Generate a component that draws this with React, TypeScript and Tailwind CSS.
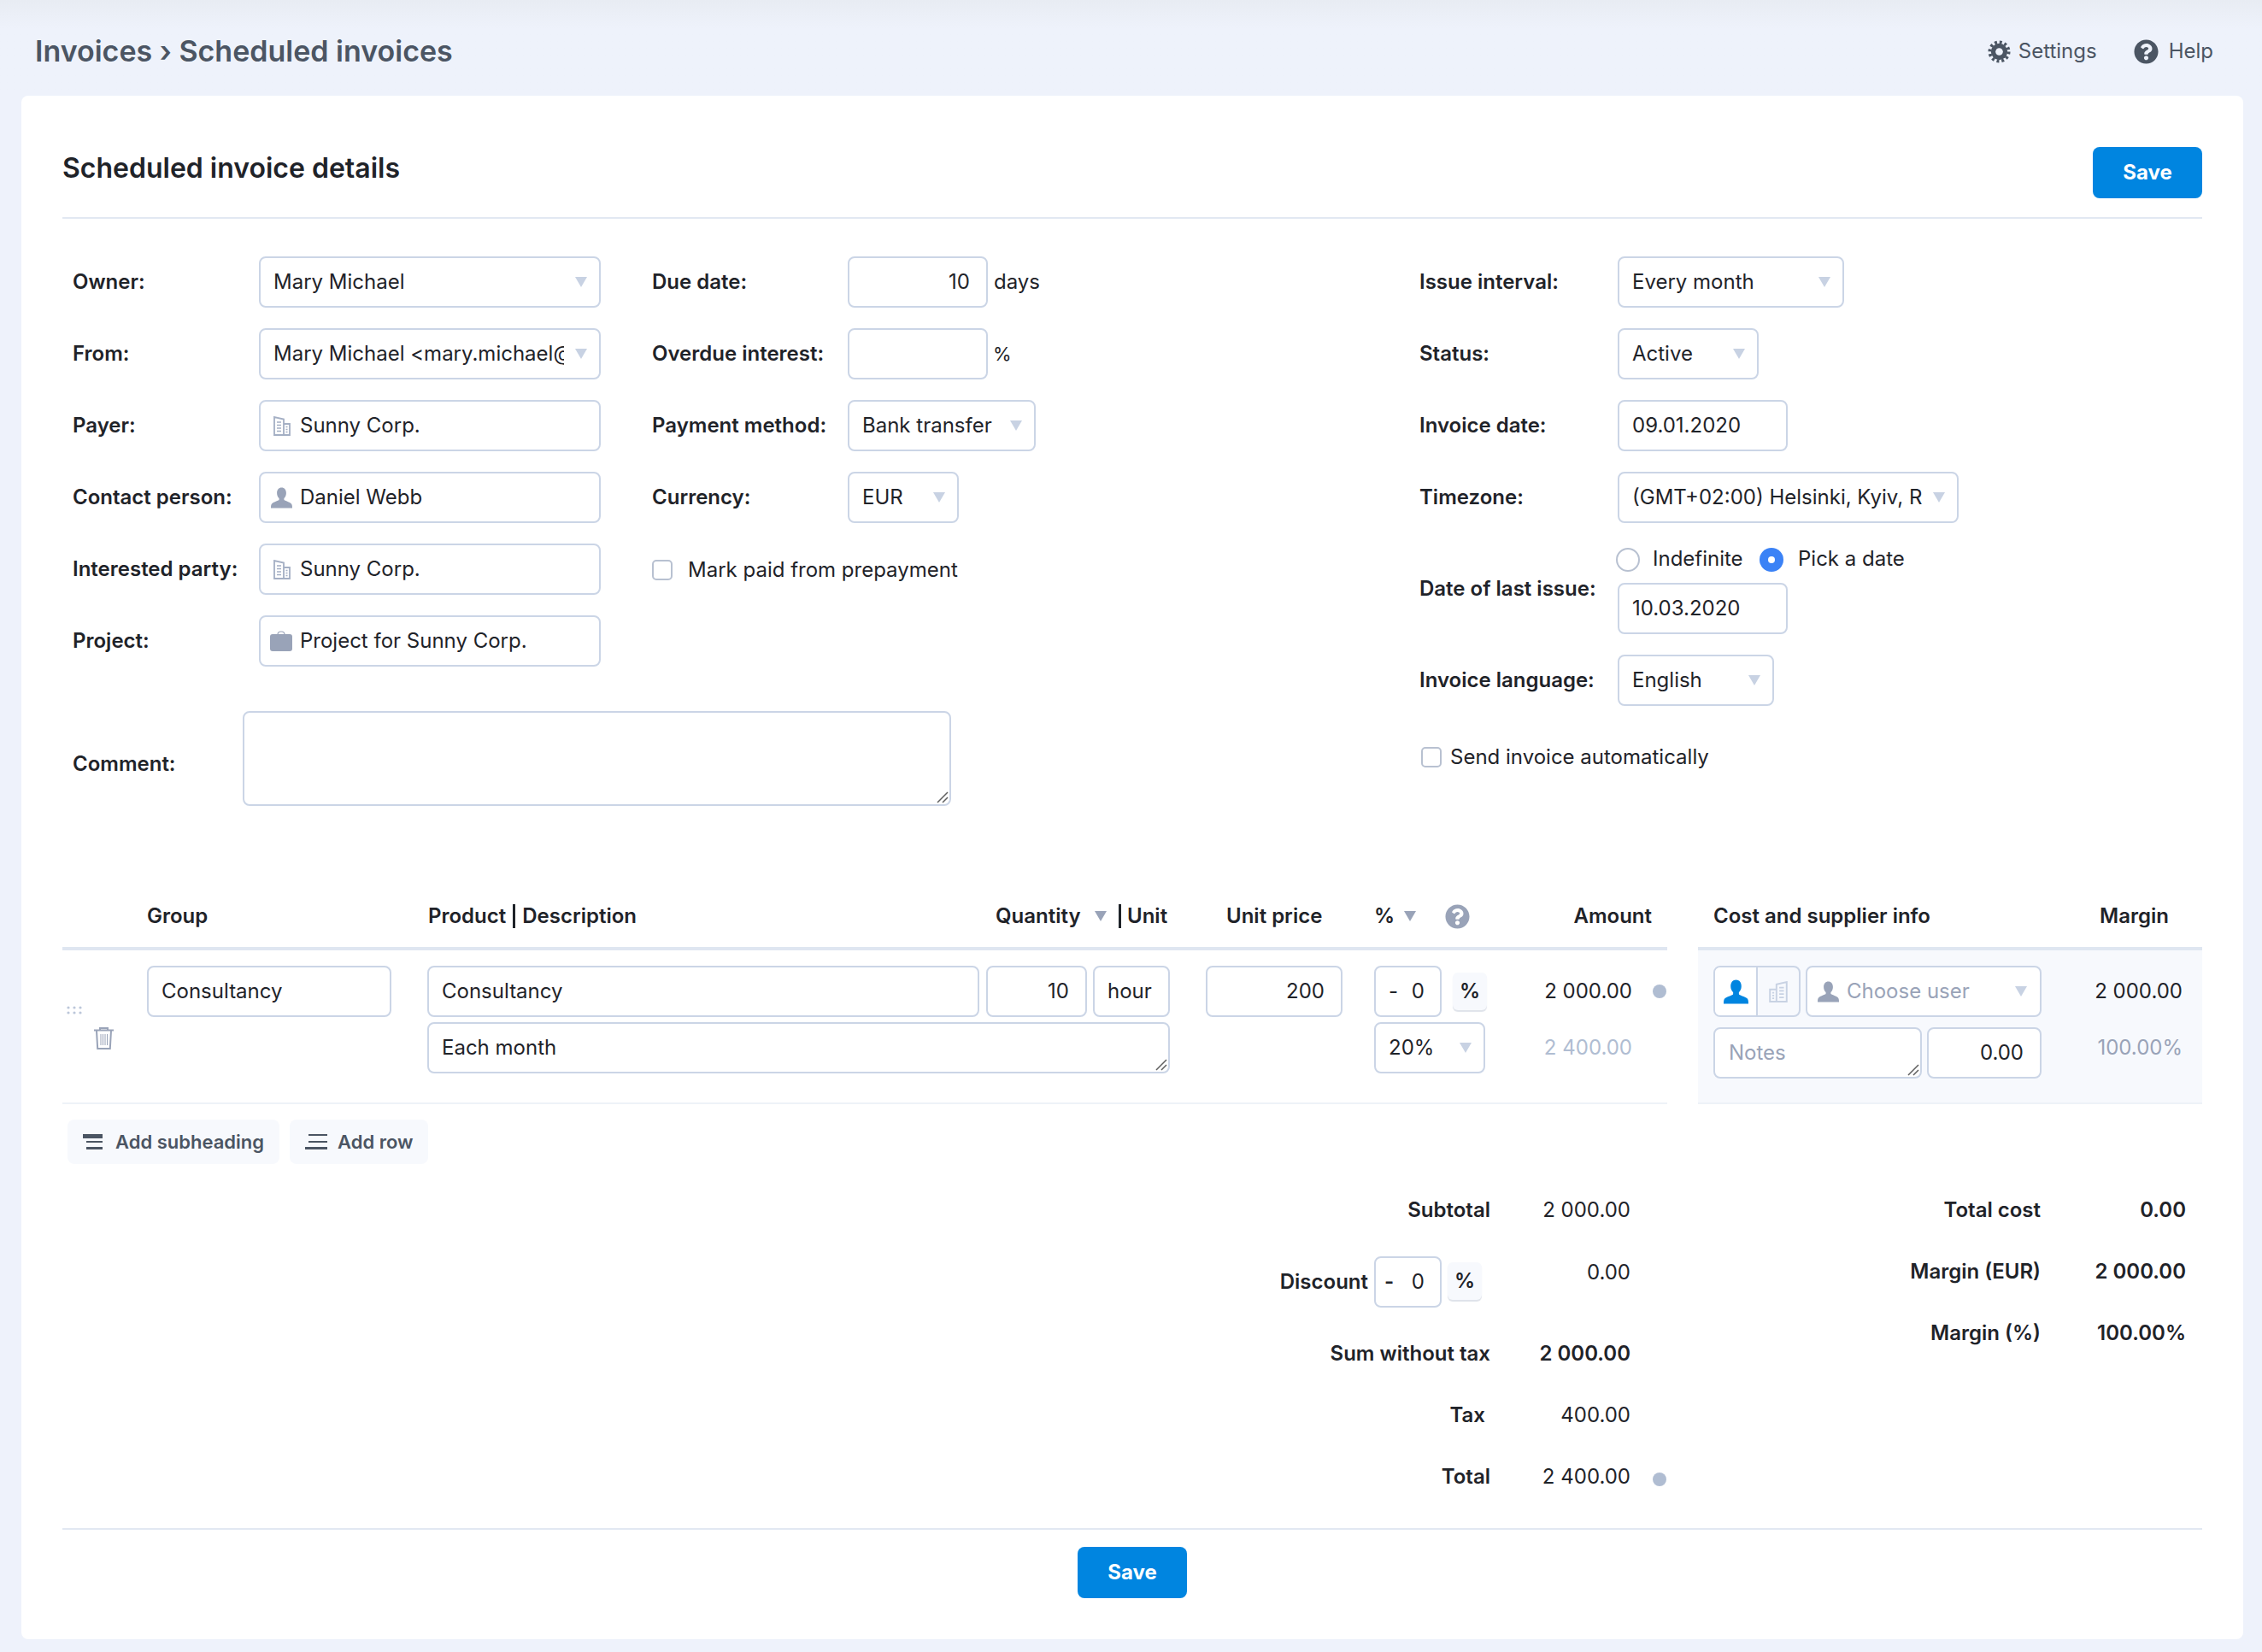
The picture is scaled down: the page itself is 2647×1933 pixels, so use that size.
import { FaQuestionCircle } from "react-icons/fa";

const fieldBase = "h-[60px] rounded-[8px] border-2 border-[#cbd5e6] bg-white text-[24px] text-[#1f2329] outline-none";

function Caret({ className = "fill-[#c8d2e3]" }: { className?: string }) {
    return (
        <svg viewBox="0 0 14 12" className={`w-[14px] h-[12px] shrink-0 ${className}`}>
            <polygon points="0,0 14,0 7,12" />
        </svg>
    );
}

function Person({ className = "" }: { className?: string }) {
    return (
        <svg viewBox="0 0 24 24" className={className}>
            <path d="M12 0.5c3.2 0 5.2 2.5 5.2 6.2 0 2.5-1 4.6-2.4 5.8v1.7c0 1 6 2.3 8 4.3 .8 .8 1.2 1.8 1.2 5H0c0-3.2 .4-4.2 1.2-5 2-2 8-3.3 8-4.3v-1.7C7.800 11.300 6.800 9.200 6.800 6.700 6.800 3 8.800 .5 12 .5z" />
        </svg>
    );
}

function Building({ className = "" }: { className?: string }) {
    return (
        <svg viewBox="0 0 20 23" className={`fill-none stroke-current ${className}`} strokeWidth="1.8">
            <path d="M8 22V3.500L19 1v21H1V9h7" />
            <path d="M11 7h5M11 10.500h5M11 14h5M11 17.500h5M3.500 12.500h2M3.500 15.500h2M3.500 18.500h2" strokeWidth="1.600" />
        </svg>
    );
}

function Briefcase() {
    return (
        <svg viewBox="0 0 26 24" className="w-[26px] h-[24px] ml-[-3px] shrink-0 fill-[#99a3b8]">
            <path d="M9 4.500C9 2 10.500 1 13 1s4 1 4 3.500" fill="none" stroke="#99a3b8" strokeWidth="1.200" />
            <rect x="0" y="4" width="26" height="20" rx="3" />
        </svg>
    );
}

function Gear() {
    return (
        <svg viewBox="0 0 28 28" className="w-[27px] h-[27px]">
            <circle cx="14" cy="14" r="10" fill="#4b5563" />
            <circle cx="14" cy="14" r="11.500" fill="none" stroke="#4b5563" strokeWidth="4" strokeDasharray="3.010 3.010" />
            <circle cx="14" cy="14" r="4.500" fill="#eef2fb" />
        </svg>
    );
}

function Trash() {
    return (
        <svg viewBox="0 0 23 26" className="w-[23px] h-[26px] fill-none stroke-[#99a3b8] ml-[37px] mt-[15px]" strokeWidth="2">
            <path d="M0 3.500h23M7 3V1h9v2M3 4l1.200 21h14.600L20 4" />
            <path d="M8 8v13M10.500 8v13M13 8v13M15.500 8v13" strokeWidth="1" />
        </svg>
    );
}

function DragDots() {
    return (
        <svg viewBox="0 0 18 10" className="w-[18px] h-[10px] fill-[#bcc7da] ml-[5px] mt-[47px]">
            <circle cx="2" cy="2" r="1.600" />
            <circle cx="9" cy="2" r="1.600" />
            <circle cx="16" cy="2" r="1.600" />
            <circle cx="2" cy="8" r="1.600" />
            <circle cx="9" cy="8" r="1.600" />
            <circle cx="16" cy="8" r="1.600" />
        </svg>
    );
}

function Select({ width, text }: { width: string; text: string }) {
    return (
        <div className={`${fieldBase} ${width} flex items-center pl-[15px] pr-[14px] gap-[13px]`}>
            <span className="flex-1 min-w-0 overflow-hidden whitespace-nowrap">{text}</span>
            <Caret />
        </div>
    );
}

function TextBox({ width, value = "", right = false }: { width: string; value?: string; right?: boolean }) {
    return (
        <input
            readOnly
            value={value}
            className={`${fieldBase} ${width} pl-[15px] pb-[2px] ${right ? "text-right pr-[19px]" : "pr-[15px]"}`}
        />
    );
}

// textarea with the little drag handle drawn over its corner
function TextArea({ width, height, value, placeholder, pad = "" }: { width: string; height: string; value?: string; placeholder?: string; pad?: string }) {
    return (
        <div className={`relative ${width} ${height} shrink-0`}>
            <textarea
                readOnly
                value={value}
                placeholder={placeholder}
                className={`${fieldBase} w-full !h-full resize-none block ${pad} placeholder:text-[#99a3b8]`}
            />
            <svg viewBox="0 0 14 14" className="absolute right-[3px] bottom-[3px] w-[14px] h-[14px] stroke-[#5f5f5f]" strokeWidth="1.500">
                <path d="M1 13L13 1M7 13l6-6" />
            </svg>
        </div>
    );
}

function IconBox({ icon, text }: { icon: React.ReactNode; text: string }) {
    return (
        <div className={`${fieldBase} w-[400px] flex items-center pl-[14px]`}>
            <span className="w-[32px] flex items-center justify-start shrink-0">{icon}</span>
            {text}
        </div>
    );
}

function Row({ label, width, children }: { label: string; width: string; children: React.ReactNode }) {
    return (
        <div className="flex items-center h-[60px]">
            <span className={`${width} shrink-0 text-[24px] font-semibold text-[#1f2329]`}>{label}</span>
            {children}
        </div>
    );
}

function Checkbox({ label, gap }: { label: string; gap: string }) {
    return (
        <div className={`flex items-center ${gap} text-[24px] text-[#1f2329]`}>
            <span className="w-[24px] h-[24px] rounded-[5px] border-2 border-[#b8c1d1] bg-white shrink-0" />
            {label}
        </div>
    );
}

function Bar() {
    return <span className="w-[3px] h-[28px] bg-[#1f2329] block" />;
}

function Dot() {
    return <span className="w-[16px] h-[16px] rounded-full bg-[#b0bdd2] block shrink-0" />;
}

function PercentBtn() {
    return (
        <span className="w-[40px] h-[44px] rounded-[6px] bg-[#f7f9fd] flex items-center justify-center text-[24px] font-semibold text-[#1f2329] shadow-[0_2px_1px_#dfe3ea]">
            %
        </span>
    );
}

function TotalRow({ label, value, bold = false, tax = false, dot = false }: { label: string; value: string; bold?: boolean; tax?: boolean; dot?: boolean }) {
    return (
        <div className="flex items-center justify-end h-[72px] text-[24px] text-[#1f2329]">
            <span className="font-semibold">{label}</span>
            <span className={`${tax ? "w-[170px]" : "w-[164px]"} text-right ${bold ? "font-semibold" : ""}`}>{value}</span>
            <span className="w-[43px] flex justify-end pr-[1px] pt-[6px]">{dot && <Dot />}</span>
        </div>
    );
}

function MarginRow({ label, value }: { label: string; value: string }) {
    return (
        <div className="flex items-center justify-end h-[72px] text-[24px] font-semibold text-[#1f2329] pr-[19px]">
            <span>{label}</span>
            <span className="w-[170px] text-right">{value}</span>
        </div>
    );
}

export default function App() {
    return (
        <div className="[font-family:Inter,sans-serif] w-full min-h-[1933px] bg-[#eef2fb] flex flex-col">
            <header className="h-[112px] pt-[6px] pl-[41px] pr-[57px] flex items-center justify-between bg-gradient-to-b from-[#e8ecf3] to-[#eef2fb] to-[30%]">
                <h1 className="text-[34px] font-semibold text-[#4b5563]">Invoices › Scheduled invoices</h1>
                <div className="flex items-center text-[24px] text-[#4b5563] pt-[2px]">
                    <Gear />
                    <span className="ml-[9px]">Settings</span>
                    <FaQuestionCircle className="w-[29px] h-[29px] ml-[43px] text-[#4b5563]" />
                    <span className="ml-[12px]">Help</span>
                </div>
            </header>

            <main className="ml-[25px] mr-[22px] h-[1806px] bg-white rounded-[8px] px-[48px] pt-[60px]">
                <div className="flex items-center justify-between pb-[22px] border-b-2 border-[#e2e8f2]">
                    <h2 className="text-[32px] font-semibold text-[#1f2329] mt-[-10px]">Scheduled invoice details</h2>
                    <button className="w-[128px] h-[60px] rounded-[8px] bg-[#0085e0] text-white text-[24px] font-bold">Save</button>
                </div>

                <div className="flex mt-[44px] pl-[12px] h-[712px]">
                    <div className="w-[1576px] flex flex-col">
                        <div className="flex">
                            <div className="w-[678px] flex flex-col gap-[24px]">
                                <Row label="Owner:" width="w-[218px]"><Select width="w-[400px]" text="Mary Michael" /></Row>
                                <Row label="From:" width="w-[218px]"><Select width="w-[400px]" text="Mary Michael <mary.michael@example.com>" /></Row>
                                <Row label="Payer:" width="w-[218px]"><IconBox icon={<Building className="w-[20px] h-[23px] text-[#a4afc4] ml-[1px] -scale-x-100" />} text="Sunny Corp." /></Row>
                                <Row label="Contact person:" width="w-[218px]"><IconBox icon={<Person className="w-[25px] h-[25px] fill-[#99a3b8] ml-[-2px]" />} text="Daniel Webb" /></Row>
                                <Row label="Interested party:" width="w-[218px]"><IconBox icon={<Building className="w-[20px] h-[23px] text-[#a4afc4] ml-[1px] -scale-x-100" />} text="Sunny Corp." /></Row>
                                <Row label="Project:" width="w-[218px]"><IconBox icon={<Briefcase />} text="Project for Sunny Corp." /></Row>
                            </div>
                            <div className="flex flex-col gap-[24px]">
                                <Row label="Due date:" width="w-[229px]">
                                    <TextBox width="w-[164px]" value="10" right />
                                    <span className="ml-[7px] text-[24px] text-[#1f2329]">days</span>
                                </Row>
                                <Row label="Overdue interest:" width="w-[229px]">
                                    <TextBox width="w-[164px]" />
                                    <span className="ml-[6px] text-[22px] text-[#1f2329]">%</span>
                                </Row>
                                <Row label="Payment method:" width="w-[229px]"><Select width="w-[220px]" text="Bank transfer" /></Row>
                                <Row label="Currency:" width="w-[229px]"><Select width="w-[130px]" text="EUR" /></Row>
                                <div className="h-[60px] flex items-center pt-[2px]"><Checkbox label="Mark paid from prepayment" gap="gap-[18px]" /></div>
                            </div>
                        </div>
                        <div className="flex mt-[52px]">
                            <span className="w-[199px] shrink-0 text-[24px] font-semibold text-[#1f2329] mt-[44px]">Comment:</span>
                            <TextArea width="w-[829px]" height="h-[111px]" />
                        </div>
                    </div>

                    <div className="flex flex-col">
                        <div className="flex flex-col gap-[24px]">
                            <Row label="Issue interval:" width="w-[232px]"><Select width="w-[265px]" text="Every month" /></Row>
                            <Row label="Status:" width="w-[232px]"><Select width="w-[165px]" text="Active" /></Row>
                            <Row label="Invoice date:" width="w-[232px]"><TextBox width="w-[199px]" value="09.01.2020" /></Row>
                            <Row label="Timezone:" width="w-[232px]"><Select width="w-[399px]" text="(GMT+02:00) Helsinki, Kyiv, Riga, Vilnius" /></Row>
                        </div>
                        <div className="flex items-center mt-[29px]">
                            <span className="w-[232px] shrink-0 text-[24px] font-semibold text-[#1f2329] mt-[-5px]">Date of last issue:</span>
                            <div className="flex flex-col gap-[13px]">
                                <div className="flex items-center h-[28px] text-[24px] text-[#1f2329] ml-[-2px]">
                                    <span className="w-[28px] h-[28px] rounded-full border-2 border-[#b8c1d1] bg-white" />
                                    <span className="ml-[15px] w-[125px] mt-[-2px]">Indefinite</span>
                                    <span className="w-[28px] h-[28px] rounded-full bg-[#3b82f6] flex items-center justify-center">
                                        <span className="w-[8px] h-[8px] rounded-full bg-white block" />
                                    </span>
                                    <span className="ml-[17px] mt-[-2px]">Pick a date</span>
                                </div>
                                <TextBox width="w-[199px]" value="10.03.2020" />
                            </div>
                        </div>
                        <div className="mt-[24px]">
                            <Row label="Invoice language:" width="w-[232px]"><Select width="w-[183px]" text="English" /></Row>
                        </div>
                        <div className="mt-[42px] ml-[2px]"><Checkbox label="Send invoice automatically" gap="gap-[10px]" /></div>
                    </div>
                </div>

                <div className="flex gap-[36px]">
                    <div className="w-[1878px] flex flex-col">
                        <div className="flex items-center h-[72px] mt-[24px] text-[24px] font-semibold text-[#1f2329]">
                            <span className="w-[99px]" />
                            <span className="w-[329px]">Group</span>
                            <span className="w-[664px] flex items-center gap-[8px]">Product <Bar /> Description</span>
                            <span className="w-[116px]">Quantity</span>
                            <span className="w-[28px]"><Caret className="fill-[#99a3b8]" /></span>
                            <span className="w-[10px]"><Bar /></span>
                            <span className="w-[116px]">Unit</span>
                            <span className="w-[173px]">Unit price</span>
                            <span className="w-[35px]">%</span>
                            <span className="w-[48px]"><Caret className="fill-[#99a3b8]" /></span>
                            <FaQuestionCircle className="w-[29px] h-[29px] text-[#99a3b8]" />
                            <span className="flex-1 text-right pr-[18px]">Amount</span>
                        </div>
                        <div className="flex h-[184px] pt-[18px] border-t-4 border-t-[#dfe6f1] border-b-2 border-b-[#eef2f8]">
                            <div className="w-[99px] flex flex-col items-start">
                                <DragDots />
                                <Trash />
                            </div>
                            <div className="w-[328px]"><TextBox width="w-[286px]" value="Consultancy" /></div>
                            <div className="w-[869px] flex flex-col gap-[6px]">
                                <div className="flex">
                                    <TextBox width="w-[646px]" value="Consultancy" />
                                    <TextBox width="w-[118px] ml-[8px]" value="10" right />
                                    <TextBox width="w-[90px] ml-[7px]" value="hour" />
                                </div>
                                <TextArea width="w-full" height="h-[60px]" value="Each month" pad="pl-[15px] pr-[16px] pt-[10px]" />
                            </div>
                            <div className="w-[160px] ml-[42px]"><TextBox width="w-full" value="200" right /></div>
                            <div className="w-[132px] ml-[37px] flex flex-col gap-[6px]">
                                <div className="flex items-center">
                                    <div className={`${fieldBase} w-[79px] flex items-center justify-between pl-[15px] pr-[18px]`}><span>-</span><span>0</span></div>
                                    <span className="ml-[13px]"><PercentBtn /></span>
                                </div>
                                <Select width="w-[130px]" text="20%" />
                            </div>
                            <div className="w-[211px] flex flex-col gap-[6px] text-[24px]">
                                <div className="h-[60px] flex items-center justify-end text-[#1f2329] pr-[1px]">
                                    2 000.00
                                    <span className="ml-[24px]"><Dot /></span>
                                </div>
                                <div className="h-[60px] flex items-center justify-end text-[#b0bdd2] pr-[41px]">2 400.00</div>
                            </div>
                        </div>
                        <div className="flex gap-[12px] mt-[18px] ml-[6px]">
                            <button className="w-[248px] h-[52px] rounded-[8px] bg-[#f7f9fd] flex items-center pl-[18px] gap-[15px] text-[22px] font-semibold text-[#4b5563]">
                                <svg viewBox="0 0 23 18" className="w-[23px] h-[18px] fill-[#4b5563]">
                                    <rect x="0" y="0" width="23" height="5" />
                                    <rect x="4" y="8" width="19" height="2" />
                                    <rect x="4" y="15" width="19" height="3" />
                                </svg>
                                Add subheading
                            </button>
                            <button className="w-[162px] h-[52px] rounded-[8px] bg-[#f7f9fd] flex items-center pl-[18px] gap-[12px] text-[22px] font-semibold text-[#4b5563]">
                                <svg viewBox="0 0 26 18" className="w-[26px] h-[18px] fill-[#4b5563]">
                                    <rect x="4" y="0" width="22" height="2" />
                                    <rect x="4" y="8" width="22" height="2" />
                                    <rect x="0" y="15" width="26" height="3" />
                                </svg>
                                Add row
                            </button>
                        </div>
                    </div>

                    <div className="w-[590px] flex flex-col">
                        <div className="flex items-center justify-between h-[72px] mt-[24px] pl-[18px] pr-[39px] text-[24px] font-semibold text-[#1f2329]">
                            <span>Cost and supplier info</span>
                            <span>Margin</span>
                        </div>
                        <div className="flex h-[184px] pt-[18px] pl-[18px] bg-[#f7f9fd] border-t-4 border-t-[#dfe6f1] border-b-2 border-b-[#eef2f8]">
                            <div className="w-[384px] flex flex-col gap-[12px]">
                                <div className="flex">
                                    <div className="w-[102px] h-[60px] rounded-[8px] border-2 border-[#cbd5e6] flex overflow-hidden">
                                        <span className="w-[50px] bg-white border-r-2 border-[#cbd5e6] flex items-center justify-center">
                                            <Person className="w-[29px] h-[29px] fill-[#0085e0]" />
                                        </span>
                                        <span className="flex-1 flex items-center justify-center">
                                            <Building className="w-[22px] h-[25px] text-[#c8d2e3]" />
                                        </span>
                                    </div>
                                    <div className={`${fieldBase} w-[276px] ml-[6px] flex items-center pl-[12px] pr-[15px] text-[#99a3b8]`}>
                                        <Person className="w-[25px] h-[25px] fill-[#99a3b8] mr-[9px]" />
                                        <span className="flex-1">Choose user</span>
                                        <Caret />
                                    </div>
                                </div>
                                <div className="flex">
                                    <TextArea width="w-[244px]" height="h-[60px]" placeholder="Notes" pad="pl-[16px] pt-[10px]" />
                                    <TextBox width="w-[134px] ml-[6px]" value="0.00" right />
                                </div>
                            </div>
                            <div className="flex-1 flex flex-col gap-[6px] text-[24px] items-end pr-[23px]">
                                <span className="h-[60px] flex items-center text-[#1f2329]">2 000.00</span>
                                <span className="h-[60px] flex items-center text-[#99a3b8]">100.00%</span>
                            </div>
                        </div>
                    </div>
                </div>

                <div className="flex gap-[36px] mt-[18px]">
                    <div className="w-[1878px] flex flex-col">
                        <TotalRow label="Subtotal" value="2 000.00" />
                        <div className="flex justify-end h-[96px] text-[24px] text-[#1f2329]">
                            <div className="flex items-center h-[60px] mt-[18px] font-semibold">
                                Discount
                                <div className={`${fieldBase} w-[79px] ml-[7px] flex items-center justify-between pl-[10px] pr-[18px] font-normal`}><span className="font-semibold">-</span><span>0</span></div>
                                <span className="ml-[7px] mt-[-2px]"><PercentBtn /></span>
                            </div>
                            <span className="w-[174px] text-right pt-[19px]">0.00</span>
                            <span className="w-[43px]" />
                        </div>
                        <TotalRow label="Sum without tax" value="2 000.00" bold />
                        <TotalRow label="Tax" value="400.00" tax />
                        <TotalRow label="Total" value="2 400.00" dot />
                    </div>
                    <div className="w-[590px] flex flex-col">
                        <MarginRow label="Total cost" value="0.00" />
                        <MarginRow label="Margin (EUR)" value="2 000.00" />
                        <MarginRow label="Margin (%)" value="100.00%" />
                    </div>
                </div>

                <div className="mt-[24px] pt-[20px] border-t-2 border-[#e2e8f2] flex justify-center">
                    <button className="w-[128px] h-[60px] rounded-[8px] bg-[#0085e0] text-white text-[24px] font-bold">Save</button>
                </div>
            </main>
        </div>
    );
}
